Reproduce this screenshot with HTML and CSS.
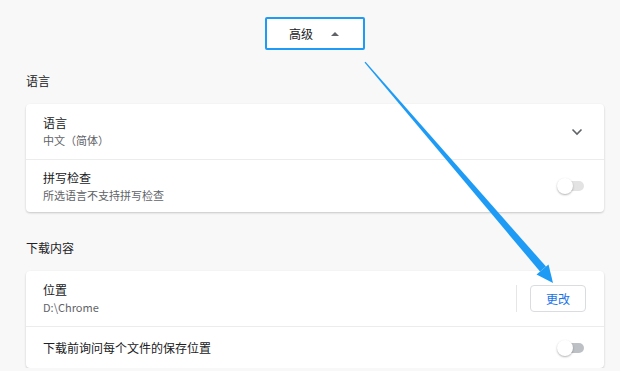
FILE: index.html
```html
<!DOCTYPE html>
<html lang="zh-CN">
<head>
    <meta charset="UTF-8">
    <title>设置 - 高级</title>
    <link rel="stylesheet" href="styles.css">
</head>
<body>
    <div class="page">
        <div class="advanced-bar">
            <button class="advanced-toggle">高级 <span class="caret-up"></span></button>
        </div>

        <h2 class="section-title">语言</h2>
        <div class="card">
            <div class="row">
                <div class="row-text">
                    <div class="row-label">语言</div>
                    <div class="row-sub">中文（简体）</div>
                </div>
                <svg class="chevron" width="12" height="8" viewBox="0 0 12 8">
                    <path d="M1.5 1.5 L6 6 L10.5 1.5" fill="none" stroke="#5f6368" stroke-width="1.6"/>
                </svg>
            </div>
            <div class="row">
                <div class="row-text">
                    <div class="row-label">拼写检查</div>
                    <div class="row-sub">所选语言不支持拼写检查</div>
                </div>
                <span class="switch switch-light"><span class="knob"></span></span>
            </div>
        </div>

        <h2 class="section-title">下载内容</h2>
        <div class="card">
            <div class="row">
                <div class="row-text">
                    <div class="row-label">位置</div>
                    <div class="row-sub">D:\Chrome</div>
                </div>
                <span class="separator"></span>
                <button class="change-btn">更改</button>
            </div>
            <div class="row row-single">
                <div class="row-text">
                    <div class="row-label">下载前询问每个文件的保存位置</div>
                </div>
                <span class="switch"><span class="knob"></span></span>
            </div>
        </div>
    </div>

    <!-- 标注箭头 -->
    <svg class="annotation" width="620" height="371" viewBox="0 0 620 371">
        <polygon points="364.5,62.5 365.5,61.7 546,266.5 540,271.5" fill="#1e9bf5"/>
        <polygon points="553,283 548.5,264.5 536.5,274.5" fill="#1e9bf5"/>
    </svg>
</body>
</html>
```

FILE: styles.css
```css
body {
    margin: 0;
    background-color: #f8f8f8;
    font-family: 'Noto Sans CJK SC', 'Noto Sans', sans-serif;
    color: #202124;
    overflow: hidden;
}
.page {
    width: 578px;
    margin-left: 26px;
    padding-top: 17px;
}
.advanced-bar {
    display: flex;
    justify-content: center;
}
.advanced-toggle {
    width: 100px;
    height: 33px;
    border: 2px solid #1e9bf5;
    border-radius: 2px;
    background: #fff;
    font-family: inherit;
    font-size: 12px;
    color: #202124;
    display: flex;
    align-items: center;
    padding: 0 0 0 22px;
    gap: 18px;
}
.caret-up {
    width: 0;
    height: 0;
    border-left: 4px solid transparent;
    border-right: 4px solid transparent;
    border-bottom: 4px solid #5f6368;
}
.section-title {
    font-size: 12px;
    font-weight: normal;
    margin: 0;
    padding: 22px 0 15px;
    line-height: 17px;
    color: #202124;
}
.card + .section-title {
    padding-top: 27px;
}
.card {
    background: #fff;
    border-radius: 4px;
    box-shadow: 0 1px 2px rgba(0,0,0,0.15), 0 1px 3px rgba(0,0,0,0.06);
}
.row {
    display: flex;
    align-items: center;
    height: 55px;
    padding: 0 18px 0 17px;
    border-top: 1px solid #ececec;
    box-sizing: border-box;
}
.row:first-child {
    border-top: none;
}
.row + .row {
    height: 53px;
}
.row-single {
    height: 42px !important;
}
.row-text {
    flex: 1;
}
.row-label {
    font-size: 12px;
    line-height: 17px;
    color: #202124;
}
.row-sub {
    font-size: 11px;
    line-height: 18px;
    color: #5f6368;
}
.chevron {
    margin-right: 3px;
}
.switch {
    position: relative;
    width: 24px;
    height: 10px;
    border-radius: 5px;
    background: #bdc1c6;
    margin-right: 2px;
}
.switch-light {
    background: #e3e3e3;
}
.knob {
    position: absolute;
    left: -3px;
    top: -3px;
    width: 16px;
    height: 16px;
    border-radius: 50%;
    background: #fff;
    box-shadow: 0 1px 2px rgba(0,0,0,0.3);
}
.separator {
    width: 1px;
    height: 27px;
    background: #e6e6e6;
    margin-right: 13px;
}
.change-btn {
    width: 56px;
    height: 27px;
    border: 1px solid #dadce0;
    border-radius: 4px;
    background: #fff;
    color: #1a73e8;
    font-family: inherit;
    font-size: 12px;
    padding: 0;
}
.annotation {
    position: absolute;
    left: 0;
    top: 0;
    pointer-events: none;
}
```
